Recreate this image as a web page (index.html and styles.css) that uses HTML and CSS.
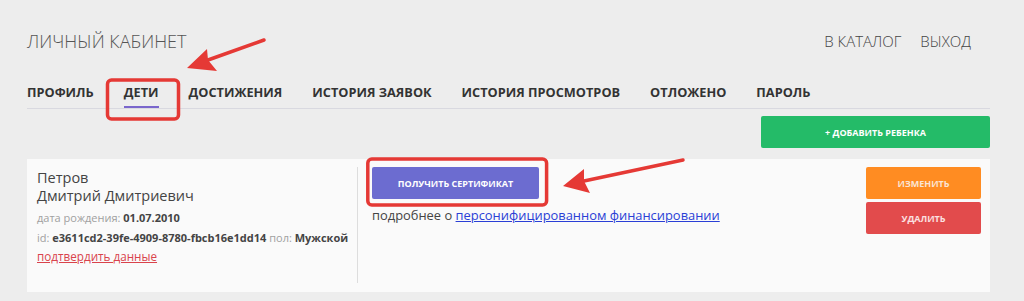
FILE: index.html
```html
<!DOCTYPE html>
<html lang="ru">

<head>
  <meta charset="UTF-8">
  <title>Личный кабинет</title>
  <link rel="stylesheet" href="styles.css">
</head>

<body>
  <div class="page">
    <div class="header">
      <h1 class="title">Личный кабинет</h1>
      <div class="top-links">
        <a href="#">В каталог</a>
        <a href="#">Выход</a>
      </div>
    </div>

    <nav class="tabs">
      <a href="#" class="tab">Профиль</a>
      <a href="#" class="tab active">Дети</a>
      <a href="#" class="tab">Достижения</a>
      <a href="#" class="tab">История заявок</a>
      <a href="#" class="tab">История просмотров</a>
      <a href="#" class="tab">Отложено</a>
      <a href="#" class="tab">Пароль</a>
    </nav>

    <div class="toolbar">
      <button class="btn btn-green">+ Добавить ребенка</button>
    </div>

    <div class="child-card">
      <div class="child-info">
        <div class="child-name">Петров<br>Дмитрий Дмитриевич</div>
        <div class="child-row"><span class="label">дата рождения:</span> <b>01.07.2010</b></div>
        <div class="child-row"><span class="label">id:</span> <b>e3611cd2-39fe-4909-8780-fbcb16e1dd14</b> <span class="label">пол:</span> <b>Мужской</b></div>
        <a href="#" class="confirm-link">подтвердить данные</a>
      </div>
      <div class="child-cert">
        <button class="btn btn-purple">Получить сертификат</button>
        <p class="cert-note">подробнее о <a href="#">персонифицированном финансировании</a></p>
      </div>
      <div class="child-actions">
        <button class="btn btn-orange">Изменить</button>
        <button class="btn btn-red">Удалить</button>
      </div>
    </div>
  </div>

  <!-- annotation marks over the screenshot -->
  <svg class="marks" width="1024" height="301" viewBox="0 0 1024 301">
    <rect x="107.5" y="80" width="71" height="39" rx="4" fill="none" stroke="#e53935" stroke-width="3.5" />
    <rect x="367.8" y="159" width="178.8" height="46" rx="4" fill="none" stroke="#e53935" stroke-width="3.5" />
    <line x1="264" y1="40" x2="208" y2="60" stroke="#e53935" stroke-width="3.5" stroke-linecap="round" />
    <polygon points="187,68 217,71 208,60 207,49" fill="#e53935" />
    <line x1="683" y1="160" x2="584" y2="181" stroke="#e53935" stroke-width="3.5" stroke-linecap="round" />
    <polygon points="563,186 590,193 584,181 584,169" fill="#e53935" />
  </svg>
</body>

</html>
```

FILE: styles.css
```css
body {
  margin: 0;
  font-family: "Open Sans", "Liberation Sans", sans-serif;
  background-color: #ededed;
  color: #333;
}

a {
  color: inherit;
  text-decoration: none;
}

.page {
  width: 963px;
  margin-left: 27px;
  padding-top: 29px;
}

.header {
  display: flex;
  justify-content: space-between;
  align-items: center;
  height: 24px;
}

.title {
  margin: 0;
  font-size: 18px;
  font-weight: 300;
  line-height: 24px;
  text-transform: uppercase;
  color: #555;
}

.top-links {
  display: flex;
  gap: 19px;
  padding-right: 19px;
  font-size: 15px;
  font-weight: 300;
  text-transform: uppercase;
  color: #444;
}

.tabs {
  display: flex;
  gap: 30px;
  margin-top: 30px;
  border-bottom: 1px solid #d9d9e0;
}

.tab {
  font-size: 12.75px;
  font-weight: 700;
  line-height: 18px;
  text-transform: uppercase;
  color: #333;
  padding-bottom: 5px;
  border-bottom: 2px solid transparent;
}

.tab.active {
  border-bottom-color: #7a66cc;
}

.toolbar {
  display: flex;
  justify-content: flex-end;
  margin-top: 7px;
}

.btn {
  font-family: "Open Sans", "Liberation Sans", sans-serif;
  font-size: 9px;
  font-weight: 700;
  text-transform: uppercase;
  color: #fff;
  border: none;
  border-radius: 2px;
  height: 32px;
  cursor: pointer;
}

.btn-green {
  width: 229px;
  background-color: #24bb68;
}

.btn-purple {
  width: 167px;
  background-color: #6c6cd0;
}

.btn-orange {
  width: 115px;
  background-color: #ff8c22;
  color: #fbe4d2;
}

.btn-red {
  width: 115px;
  background-color: #e24b4c;
  color: #fbe0e0;
}

.child-card {
  display: flex;
  min-height: 116px;
  margin-top: 11px;
  padding: 8px 0 9px;
  background-color: #fafafa;
}

.child-info {
  width: 311px;
  padding: 2px 9px 0 10px;
  border-right: 1px solid #ddd;
}

.child-name {
  font-size: 14.5px;
  line-height: 18px;
  color: #444;
  margin-bottom: 3px;
}

.child-row {
  font-size: 11px;
  line-height: 20px;
  color: #444;
  white-space: nowrap;
}

.label {
  color: #a0a0a0;
}

.confirm-link {
  display: block;
  font-size: 11.7px;
  line-height: 16px;
  color: #d9434c;
  text-decoration: underline;
}

.child-cert {
  padding-left: 14px;
}

.cert-note {
  margin: 8px 0 0;
  font-size: 12.9px;
  line-height: 16px;
  color: #444;
}

.cert-note a {
  color: #2a3fd6;
  text-decoration: underline;
}

.child-actions {
  display: flex;
  flex-direction: column;
  gap: 3px;
  margin-left: auto;
  padding-right: 9px;
}

.marks {
  position: absolute;
  top: 0;
  left: 0;
  pointer-events: none;
}
```
